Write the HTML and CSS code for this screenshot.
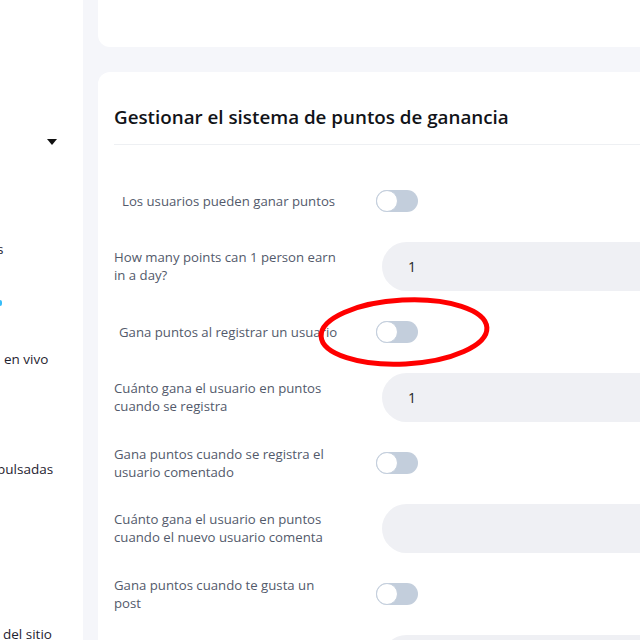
FILE: index.html
```
<!DOCTYPE html>
<html lang="es">
<head>
<meta charset="utf-8">
<title>Puntos de ganancia</title>
<link rel="stylesheet" href="styles.css">
</head>
<body>
<div class="page">
  <aside class="sidebar">
    <div class="caret-row"><span class="caret"></span></div>
    <div class="nav-item nav-1">s</div>
    <div class="nav-active"></div>
    <div class="nav-item nav-2">en vivo</div>
    <div class="nav-item nav-3">pulsadas</div>
    <div class="nav-item nav-4">del sitio</div>
  </aside>
  <main class="main">
    <div class="card card-top"></div>
    <section class="card card-points">
      <h2 class="title">Gestionar el sistema de puntos de ganancia</h2>
      <div class="rows">
        <div class="row">
          <div class="label label-single">Los usuarios pueden ganar puntos</div>
          <div class="control"><span class="toggle"><span class="knob"></span></span></div>
        </div>
        <div class="row">
          <div class="label">How many points can 1 person earn in a day?</div>
          <div class="control"><div class="field">1</div></div>
        </div>
        <div class="row">
          <div class="label label-single label-b">Gana puntos al registrar un usuario</div>
          <div class="control"><span class="toggle"><span class="knob"></span></span></div>
        </div>
        <div class="row">
          <div class="label">Cuánto gana el usuario en puntos cuando se registra</div>
          <div class="control"><div class="field">1</div></div>
        </div>
        <div class="row">
          <div class="label">Gana puntos cuando se registra el usuario comentado</div>
          <div class="control"><span class="toggle"><span class="knob"></span></span></div>
        </div>
        <div class="row">
          <div class="label">Cuánto gana el usuario en puntos cuando el nuevo usuario comenta</div>
          <div class="control"><div class="field"></div></div>
        </div>
        <div class="row">
          <div class="label">Gana puntos cuando te gusta un post</div>
          <div class="control"><span class="toggle"><span class="knob"></span></span></div>
        </div>
        <div class="row">
          <div class="label"></div>
          <div class="control"><div class="field"></div></div>
        </div>
      </div>
    </section>
  </main>
  <svg class="annotation" width="176" height="76" viewBox="0 0 176 76" aria-hidden="true">
    <ellipse cx="88" cy="38" rx="83" ry="32" fill="none" stroke="#ff0000" stroke-width="5" transform="rotate(-3 88 38)"/>
  </svg>
</div>
</body>
</html>
```
FILE: styles.css
```
* { box-sizing: border-box; }
html, body { margin: 0; padding: 0; }
body {
  width: 640px;
  height: 640px;
  overflow: hidden;
  background: #f5f6fa;
  font-family: "Open Sans", "Noto Sans", sans-serif;
}
.page {
  position: relative;
  display: flex;
  width: 640px;
  height: 640px;
  overflow: hidden;
}
.sidebar {
  flex: 0 0 83px;
  background: #ffffff;
  position: relative;
  overflow: hidden;
  color: #1f2330;
  font-size: 13.5px;
}
.caret-row {
  height: 0;
}
.caret {
  position: absolute;
  left: 47px;
  top: 139px;
  width: 0;
  height: 0;
  border-left: 5.5px solid transparent;
  border-right: 5.5px solid transparent;
  border-top: 6px solid #111;
}
.nav-item {
  position: absolute;
  white-space: nowrap;
  line-height: 20px;
}
.nav-1 { left: -3px; top: 239px; }
.nav-2 { left: 4px; top: 349px; }
.nav-3 { left: -3px; top: 459px; }
.nav-4 { left: 3px; top: 624px; }
.nav-active {
  position: absolute;
  left: 0;
  top: 300px;
  width: 2px;
  height: 6px;
  background: #38bdf8;
  border-radius: 0 2px 2px 0;
}
.main {
  flex: 1 1 auto;
  padding-left: 15px;
  overflow: hidden;
}
.card {
  width: 640px;
  background: #ffffff;
}
.card-top {
  height: 47px;
  border-radius: 0 0 12px 12px;
  margin-bottom: 25px;
}
.card-points {
  border-radius: 12px;
  padding: 30px 0 0 16px;
  min-height: 700px;
}
.title {
  margin: 0 0 12px 0;
  font-size: 18.8px;
  line-height: 30px;
  font-weight: 600;
  color: #111318;
}
.rows {
  border-top: 1px solid #eef0f3;
  padding-top: 23px;
}
.row {
  display: flex;
  align-items: center;
  height: 65.5px;
}
.label {
  flex: 0 0 262px;
  padding-right: 35px;
  font-size: 13.2px;
  line-height: 18px;
  color: #535a6b;
}
.label-single { padding-left: 8px; padding-right: 0; }
.label-b { padding-left: 5px; }
.control {
  flex: 1 1 auto;
  display: flex;
  align-items: center;
}
.toggle {
  position: relative;
  display: inline-block;
  width: 42px;
  height: 22px;
  border-radius: 11px;
  background: #c3cedc;
}
.knob {
  position: absolute;
  left: 0;
  top: 0;
  width: 22px;
  height: 22px;
  border-radius: 50%;
  background: #ffffff;
  border: 1.5px solid #c3cedc;
}
.field {
  margin-left: 6px;
  width: 400px;
  height: 49px;
  border-radius: 25px;
  background: #eff0f4;
  padding-left: 26px;
  display: flex;
  align-items: center;
  font-size: 14px;
  color: #1d1f24;
}
.annotation {
  position: absolute;
  left: 316px;
  top: 294px;
}
```
